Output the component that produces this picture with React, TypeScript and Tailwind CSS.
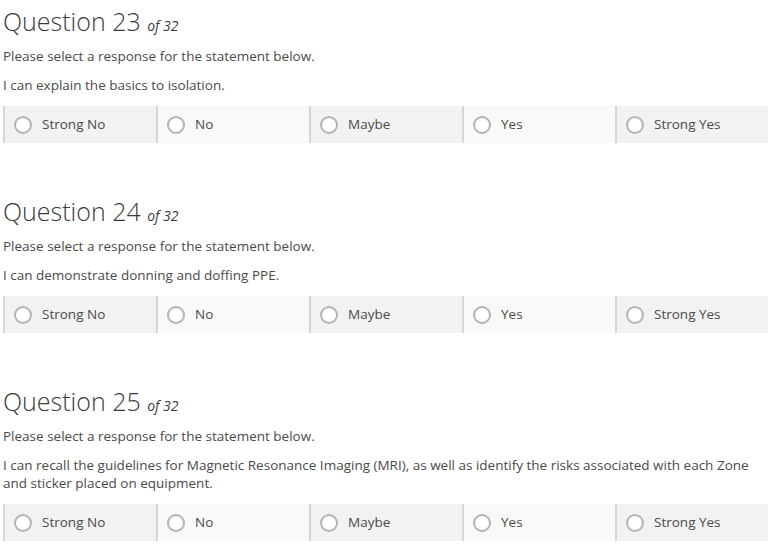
const options = ['Strong No', 'No', 'Maybe', 'Yes', 'Strong Yes']

const questions = [
  { n: 23, text: 'I can explain the basics to isolation.' },
  { n: 24, text: 'I can demonstrate donning and doffing PPE.' },
  {
    n: 25,
    text: 'I can recall the guidelines for Magnetic Resonance Imaging (MRI), as well as identify the risks associated with each Zone and sticker placed on equipment.',
  },
]

function Question({ n, text }: { n: number; text: string }) {
  return (
    <div className="flex flex-col">
      <h2 className="text-[25px] leading-[30px] font-light text-[#3a3a3a]">
        Question {n} <span className="text-[14px] italic font-normal">of 32</span>
      </h2>
      <p className="mt-[6px] text-[13.5px] leading-[18px] text-[#4a4a4a]">
        Please select a response for the statement below.
      </p>
      <p className="mt-[11px] text-[13.5px] leading-[18px] text-[#4a4a4a]">{text}</p>
      <div className="mt-[12px] grid grid-cols-5">
        {options.map((o, i) => (
          <label
            key={o}
            className={
              'flex h-[37px] items-center gap-[10px] border-l-2 border-[#d6d6d6] pl-[9px] ' +
              (i % 2 === 0 ? 'bg-[#f2f2f2]' : 'bg-[#f9f9f9]')
            }
          >
            <span className="h-[18px] w-[18px] rounded-full border-2 border-[#b3b3b3] bg-white" />
            <span className="text-[13.5px] text-[#4a4a4a]">{o}</span>
          </label>
        ))}
      </div>
    </div>
  )
}

export default function App() {
  return (
    <div className="flex w-[774px] flex-col gap-[53px] bg-white pt-[6px] pl-[3px] pr-[6px] font-['Open_Sans',sans-serif]">
      {questions.map((q) => (
        <Question key={q.n} {...q} />
      ))}
    </div>
  )
}
